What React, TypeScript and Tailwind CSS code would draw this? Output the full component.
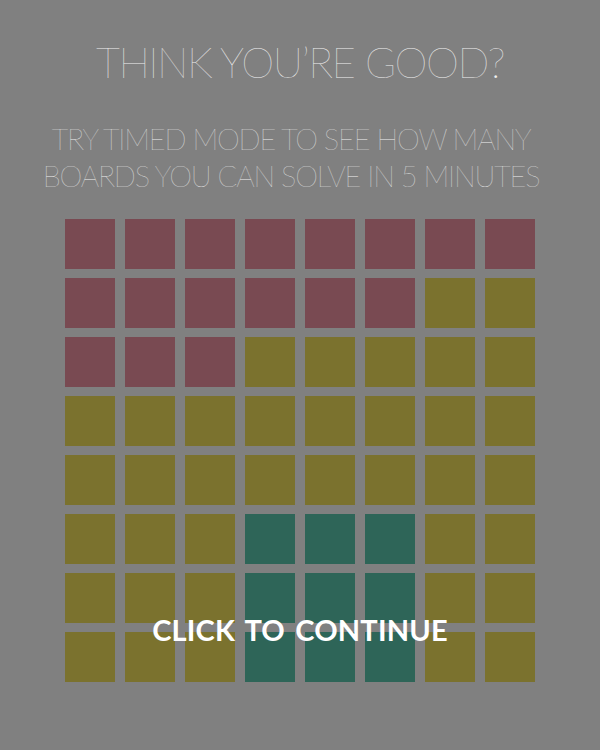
const M = 'bg-[#794a52]';
const O = 'bg-[#7b722e]';
const G = 'bg-[#2e6558]';

const board: string[][] = [
    [M, M, M, M, M, M, M, M],
    [M, M, M, M, M, M, O, O],
    [M, M, M, O, O, O, O, O],
    [O, O, O, O, O, O, O, O],
    [O, O, O, O, O, O, O, O],
    [O, O, O, G, G, G, O, O],
    [O, O, O, G, G, G, O, O],
    [O, O, O, G, G, G, O, O],
];

export default function App() {
    return (
        <div className="h-[750px] w-full bg-[#808080] flex flex-col items-center font-['Lato',sans-serif] uppercase">
            <h1 className="mt-[41px] text-[42px] leading-none font-thin tracking-[-1.5px] text-[#f0f0f0]">
                Think you’re good?
            </h1>

            <p className="mt-[37px] mr-[18px] text-[29px] leading-[37px] font-thin tracking-[-1.2px] text-[#f0f0f0] text-center">
                Try timed mode to see how many
                <br />
                boards you can solve in 5 minutes
            </p>

            <div className="relative mt-[25px]">
                <div className="grid grid-cols-8 gap-x-[10px] gap-y-[9px]">
                    {board.flat().map((color, i) => (
                        <div key={i} className={`w-[50px] h-[50px] ${color}`} />
                    ))}
                </div>
                <div className="absolute left-0 right-0 top-[396px] text-center text-[29px] leading-none font-bold text-white tracking-[0.2px] [word-spacing:3px]">
                    Click to continue
                </div>
            </div>
        </div>
    );
}
